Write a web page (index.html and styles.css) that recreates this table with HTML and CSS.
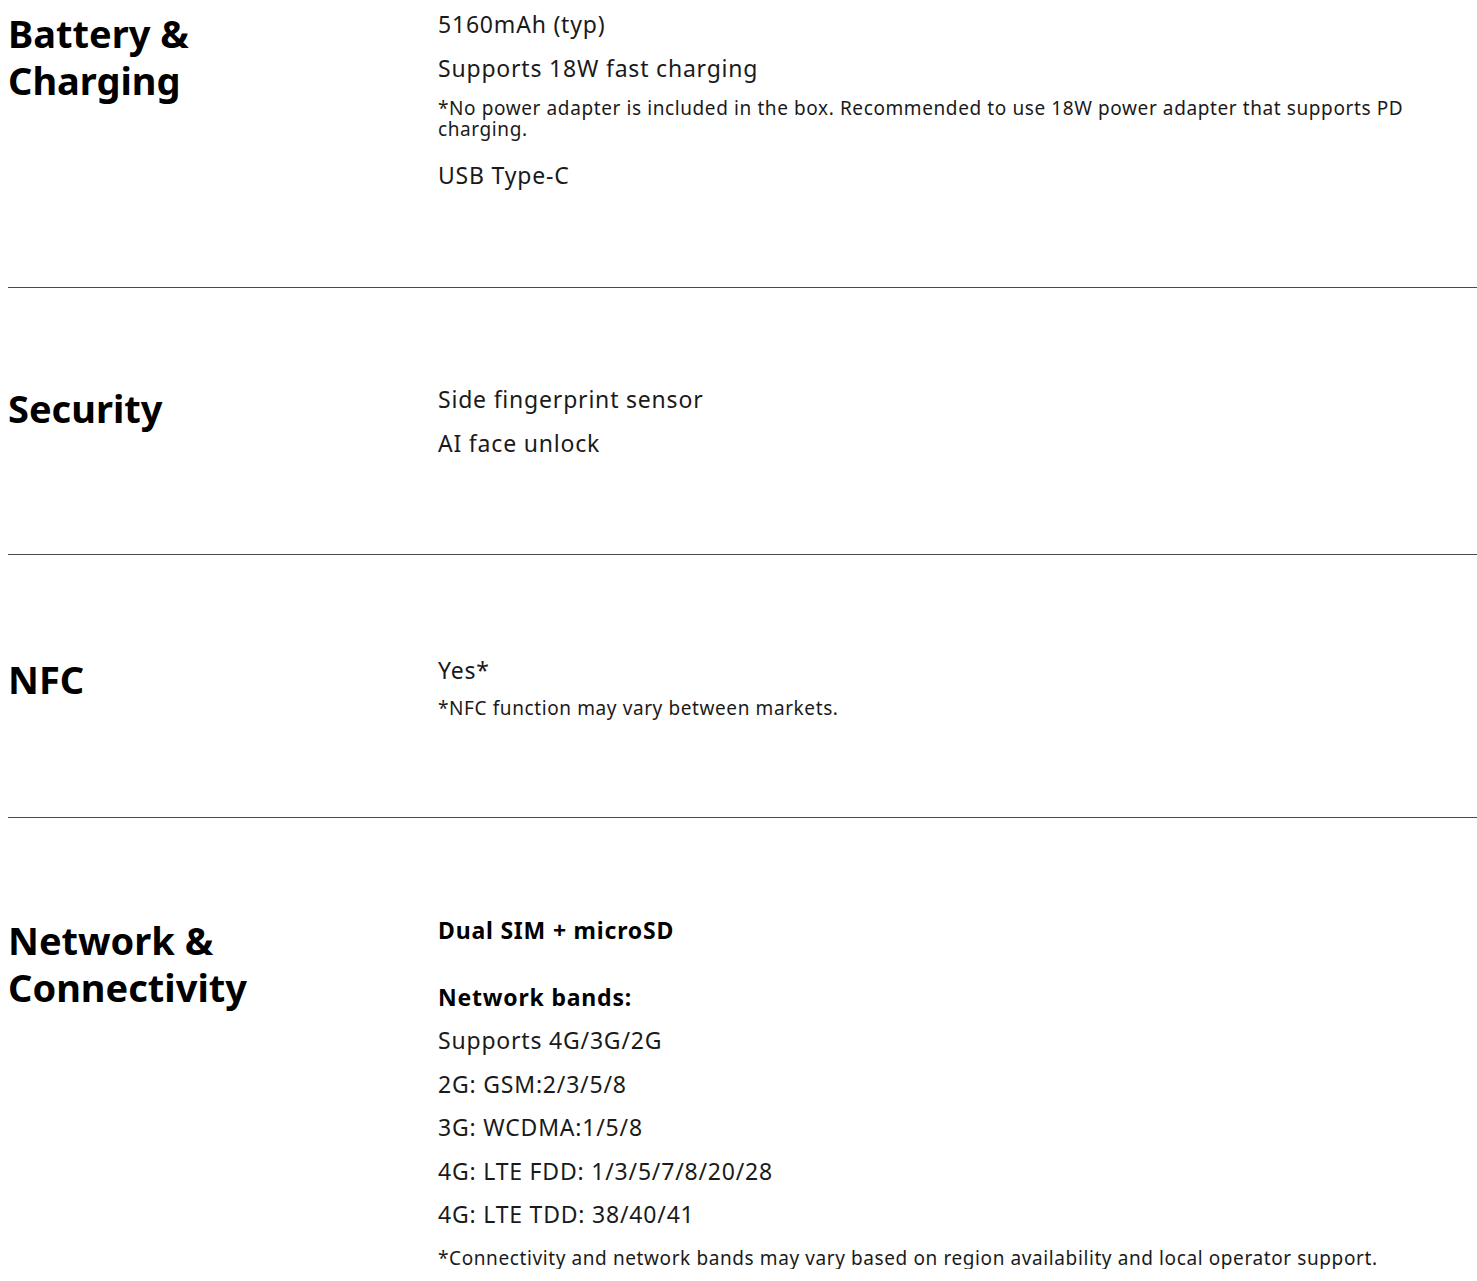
FILE: index.html
```html
<!DOCTYPE html>
<html lang="en">
<head>
<meta charset="utf-8">
<title>Specs</title>
<link rel="stylesheet" href="styles.css">
</head>
<body>
<div class="specs">
  <section class="row row-battery">
    <h2 class="title">Battery &amp;<br>Charging</h2>
    <div class="content">
      <p class="item">5160mAh (typ)</p>
      <p class="item">Supports 18W fast charging</p>
      <p class="note note-gap">*No power adapter is included in the box. Recommended to use 18W power adapter that supports PD charging.</p>
      <p class="item">USB Type-C</p>
    </div>
  </section>
  <section class="row row-security">
    <h2 class="title">Security</h2>
    <div class="content">
      <p class="item">Side fingerprint sensor</p>
      <p class="item">AI face unlock</p>
    </div>
  </section>
  <section class="row row-nfc">
    <h2 class="title">NFC</h2>
    <div class="content">
      <p class="item">Yes*</p>
      <p class="note">*NFC function may vary between markets.</p>
    </div>
  </section>
  <section class="row row-network">
    <h2 class="title">Network &amp;<br>Connectivity</h2>
    <div class="content">
      <p class="item strong">Dual SIM + microSD</p>
      <p class="item strong spaced">Network bands:</p>
      <p class="item">Supports 4G/3G/2G</p>
      <p class="item">2G: GSM:2/3/5/8</p>
      <p class="item">3G: WCDMA:1/5/8</p>
      <p class="item">4G: LTE FDD: 1/3/5/7/8/20/28</p>
      <p class="item">4G: LTE TDD: 38/40/41</p>
      <p class="note note-last">*Connectivity and network bands may vary based on region availability and local operator support.</p>
    </div>
  </section>
</div>
</body>
</html>
```
FILE: styles.css
```css
html, body {
  background: #ffffff;
}
body {
  margin: 8px 0 8px 8px;
  color: #1a1a1a;
  font-family: "Noto Sans", "Open Sans", sans-serif;
  overflow: hidden;
}
.row {
  display: grid;
  grid-template-columns: 430px 1fr;
  align-items: start;
  border-bottom: 1px solid #4a4a4a;
  padding: 95px 0;
}
.row-battery {
  padding: 0 0 96px;
}
.row-nfc {
  padding: 99px 0 98px;
}
.row-network {
  padding: 97px 0 0;
  border-bottom: none;
}
.title {
  margin: 0;
  padding-top: 2px;
  font-size: 38px;
  line-height: 47px;
  font-weight: 700;
  color: #000;
}
.content {
  display: flex;
  flex-direction: column;
  gap: 12px;
  padding-right: 40px;
}
.item {
  margin: 0;
  font-size: 23px;
  line-height: 32px;
  letter-spacing: 0.8px;
}
.note {
  margin: 0;
  font-size: 19px;
  line-height: 21px;
  letter-spacing: 0.6px;
}
.note-gap {
  margin-top: 2px;
  margin-bottom: 7px;
}
.note-last {
  margin-top: 5px;
}
.row-network .item {
  line-height: 31.5px;
}
.strong {
  font-weight: 700;
  color: #000;
}
.spaced {
  margin-top: 23px;
}
```
